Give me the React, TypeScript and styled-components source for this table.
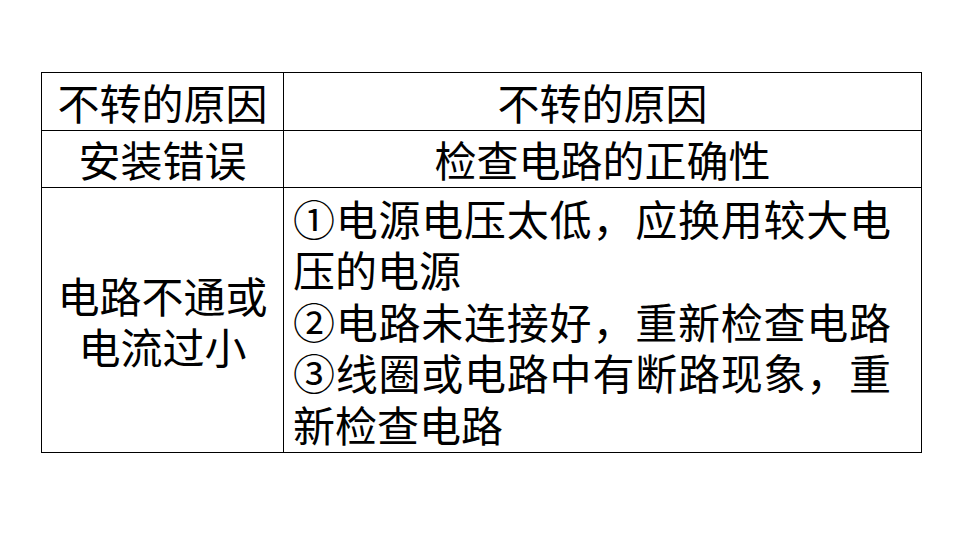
import React from "react";
import styled, { createGlobalStyle } from "styled-components";

const Global = createGlobalStyle`
  html, body { margin: 0; padding: 0; background: #fff; }
  body { font-family: "Noto Sans CJK SC", "Noto Sans", sans-serif; color: #000; }
`;

const Page = styled.div`
  width: 960px;
  height: 540px;
  padding: 72px 0 0 41px;
  box-sizing: border-box;
`;

const Table = styled.table`
  border-collapse: collapse;
  width: 881px;
  table-layout: fixed;
`;

const Row = styled.tr<{ $h: number }>`
  height: ${(p) => p.$h}px;
`;

const Cell = styled.td<{ $align?: string; $w?: number }>`
  border: 1px solid #000;
  padding: 0 8px;
  font-size: 42px;
  line-height: 51.5px;
  text-align: ${(p) => p.$align || "center"};
  vertical-align: middle;
  ${(p) => (p.$w ? `width: ${p.$w}px;` : "")}
  box-sizing: border-box;
`;

const Para = styled.div`
  padding: 3px 22px 2px 1px;
  font-size: 42px;
  line-height: 51.5px;
`;

const Line = styled.p<{ $full?: boolean }>`
  margin: 0;
  text-align: justify;
  text-align-last: ${(p) => (p.$full ? "justify" : "left")};
`;

export default function App() {
  return (
    <>
      <Global />
      <Page>
        <Table>
          <tbody>
            <Row $h={58}>
              <Cell $w={242}>不转的原因</Cell>
              <Cell>不转的原因</Cell>
            </Row>
            <Row $h={57}>
              <Cell>安装错误</Cell>
              <Cell>检查电路的正确性</Cell>
            </Row>
            <Row $h={265}>
              <Cell>电路不通或电流过小</Cell>
              <Cell $align="left">
                <Para>
                  <Line>①电源电压太低，应换用较大电压的电源</Line>
                  <Line $full>②电路未连接好，重新检查电路</Line>
                  <Line>③线圈或电路中有断路现象，重新检查电路</Line>
                </Para>
              </Cell>
            </Row>
          </tbody>
        </Table>
      </Page>
    </>
  );
}
